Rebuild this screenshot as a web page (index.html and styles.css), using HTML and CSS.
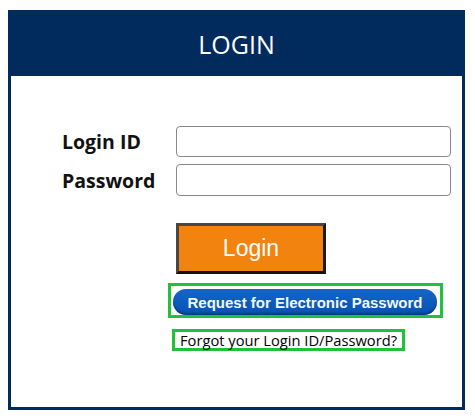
FILE: index.html
```html
<!DOCTYPE html>
<html lang="en">
  <head>
    <meta charset="UTF-8" />
    <title>Login</title>
    <link rel="stylesheet" href="styles.css">
  </head>
  <body>
    <div class="loginPanel">
      <div class="panelHeader">LOGIN</div>
      <form class="loginForm">
        <div class="fieldGrid">
          <label for="loginId">Login ID</label>
          <input type="text" id="loginId" class="firstInput" />
          <label for="password">Password</label>
          <input type="password" id="password" />
        </div>

        <div class="actions">
          <button type="button" class="loginBtn">Login</button>
          <div class="highlight requestBox">
            <a href="#" class="pillBtn">Request for Electronic Password</a>
          </div>
          <div class="highlight forgotBox">
            <a href="#" class="forgotLink">Forgot your Login ID/Password?</a>
          </div>
        </div>
      </form>
    </div>
  </body>
</html>
```

FILE: styles.css
```css
body {
  margin: 8px;
  font-family: "Open Sans", Arial, sans-serif;
  background: #fff;
}

.loginPanel {
  width: 457px;
  height: 400px;
  margin-top: 2px;
  border: 3px solid #002b5c;
  box-sizing: border-box;
}

.panelHeader {
  height: 63px;
  background: #002b5c;
  color: #fff;
  font-size: 25px;
  line-height: 63px;
  text-align: center;
}

.loginForm {
  padding: 50px 0 0 51px;
  margin: 0;
}

.fieldGrid {
  display: grid;
  grid-template-columns: 114px 275px;
  row-gap: 7px;
  align-items: center;
}

.fieldGrid label {
  font-size: 19.5px;
  font-weight: bold;
  color: #111;
}

.fieldGrid input {
  height: 32px;
  box-sizing: border-box;
  border: 1px solid #888;
  border-radius: 4px;
  margin: 0;
  padding: 4px 6px;
  font-size: 14px;
}

.fieldGrid .firstInput {
  height: 31px;
}

.actions {
  display: flex;
  flex-direction: column;
  align-items: flex-start;
  margin-left: 114px;
}

.loginBtn {
  margin-top: 27px;
  width: 150px;
  height: 51px;
  box-sizing: border-box;
  background: #f2830f;
  border: 3px solid #474747;
  border-right-color: #1b1b1b;
  border-bottom-color: #111;
  color: #fff;
  font-family: "Liberation Sans", Arial, sans-serif;
  font-size: 23px;
  padding: 0;
}

.highlight {
  border: 3px solid #22c13c;
  box-sizing: border-box;
}

.requestBox {
  margin: 9px 0 0 -8px;
  width: 275px;
  height: 35px;
  padding: 3px 3px 0 2px;
}

.pillBtn {
  display: block;
  height: 24px;
  padding-top: 2px;
  border-radius: 13px;
  background: linear-gradient(#1566c8, #0552b2);
  box-shadow: inset 0 -2px 2px rgba(0, 30, 80, 0.45);
  color: #f4f7fc;
  font-family: "Liberation Sans", Arial, sans-serif;
  font-weight: bold;
  font-size: 15px;
  line-height: 24px;
  text-align: center;
  text-decoration: none;
}

.forgotBox {
  margin: 11px 0 0 -4px;
  height: 22px;
  padding: 0 5px;
}

.forgotLink {
  display: block;
  color: #000;
  font-size: 14.7px;
  line-height: 16px;
  text-decoration: none;
}
```
